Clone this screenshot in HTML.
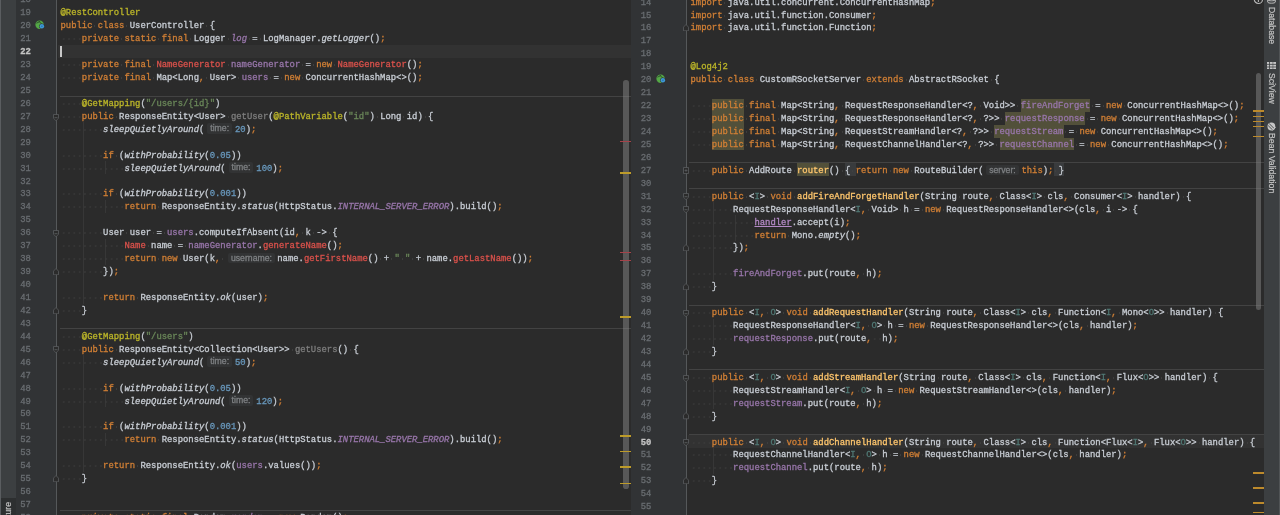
<!DOCTYPE html>
<html lang="en"><head><meta charset="utf-8"><title>IDE</title>
<style>
html,body{margin:0;padding:0;background:#2b2b2b;}
body{width:1280px;height:515px;overflow:hidden;position:relative;font-family:"Liberation Mono","DejaVu Sans Mono",monospace;font-size:8.882px;color:#c8cdd4;}
#root{position:absolute;left:0;top:0;width:1280px;height:515px;overflow:hidden;background:#2b2b2b;}
.cl,.ln{-webkit-text-stroke:0.3px;position:absolute;white-space:pre;line-height:12.94px;height:12.94px;}
.ln{color:#696d71;width:10.7px;text-align:right;}
.ln.cur{color:#c4c4c4;font-weight:bold;}
.k{color:#d07f35}.a{color:#bbb529}.s{color:#6a8759}.n{color:#6897bb}
.f{color:#9876aa}.fi{color:#9876aa;font-style:italic}.i{font-style:italic}
.r{color:#d9514b}.u{color:#7d7d7d}.m{color:#ffc66d}.t{color:#507874}
.p{color:#b389c5;text-decoration:underline}
.w{background-image:radial-gradient(circle at center,#414141 0.45px,rgba(65,65,65,0) 0.85px);background-size:5.329px 100%;background-repeat:repeat-x;}
.h{display:inline-block;text-align:center;vertical-align:top;height:12.94px;}
.h>span{display:inline-block;font-family:"Liberation Sans","DejaVu Sans",sans-serif;font-size:8.7px;color:#7e8083;background:#323334;border-radius:2px;line-height:10.6px;height:10.6px;margin-top:-0.3px;padding:0 3px;vertical-align:top;}

.vt,.vl{position:absolute;writing-mode:vertical-rl;font-family:"Liberation Sans","DejaVu Sans",sans-serif;font-size:8.7px;line-height:12px;width:12px;color:#c4c4c4;-webkit-text-stroke:0.2px;white-space:pre;}
.vt{left:1265.6px}
.vl{transform:rotate(180deg)}
</style></head><body><div id="root">
<!-- left tool strip -->
<div style="position:absolute;left:0;top:0;width:16px;height:515px;background:#3c3f41"></div>
<div style="position:absolute;left:0;top:0;width:1.2px;height:515px;background:#5a5d60"></div>
<div style="position:absolute;left:1.2px;top:497.5px;width:14.8px;height:20px;background:#2d2f30"></div>
<!-- left gutter -->
<div style="position:absolute;left:16px;top:0;width:40.5px;height:515px;background:#313335"></div>
<div style="position:absolute;left:56.3px;top:0;width:1px;height:515px;background:#55585a"></div>
<!-- right gutter -->
<div style="position:absolute;left:631px;top:0;width:55.5px;height:515px;background:#313335"></div>
<div style="position:absolute;left:686.3px;top:0;width:1px;height:515px;background:#55585a"></div>
<!-- right tool strip -->
<div style="position:absolute;left:1264px;top:0;width:16px;height:515px;background:#3c3f41"></div>
<div style="position:absolute;left:711.8px;top:98.71px;width:32.0px;height:12.94px;background:#52503a"></div>
<div style="position:absolute;left:1020.9px;top:98.71px;width:69.3px;height:12.94px;background:#52503a"></div>
<div style="position:absolute;left:711.8px;top:111.65px;width:32.0px;height:12.94px;background:#52503a"></div>
<div style="position:absolute;left:1004.9px;top:111.65px;width:79.9px;height:12.94px;background:#52503a"></div>
<div style="position:absolute;left:711.8px;top:124.59px;width:32.0px;height:12.94px;background:#52503a"></div>
<div style="position:absolute;left:994.3px;top:124.59px;width:69.3px;height:12.94px;background:#52503a"></div>
<div style="position:absolute;left:711.8px;top:137.53px;width:32.0px;height:12.94px;background:#52503a"></div>
<div style="position:absolute;left:999.6px;top:137.53px;width:74.6px;height:12.94px;background:#52503a"></div>
<div style="position:absolute;left:797.1px;top:163.41px;width:32.0px;height:12.94px;background:#52503a"></div>
<div style="position:absolute;left:845.0px;top:163.41px;width:5.3px;height:12.94px;background:#393b3d"></div>
<div style="position:absolute;left:850.4px;top:163.41px;width:5.3px;height:12.94px;background:#393b3d"></div>
<div style="position:absolute;left:1053.5px;top:163.41px;width:5.3px;height:12.94px;background:#393b3d"></div>
<div style="position:absolute;left:1058.8px;top:163.41px;width:5.3px;height:12.94px;background:#393b3d"></div>
<div style="position:absolute;left:57.5px;top:44.8px;width:573.5px;height:12.9px;background:#323232;"></div>
<div style="position:absolute;left:687.5px;top:435.1px;width:576.5px;height:12.9px;background:#323232;"></div>
<div style="position:absolute;left:59.5px;top:95.5px;width:571.5px;height:1.0px;background:#434343;"></div>
<div style="position:absolute;left:59.5px;top:328.4px;width:571.5px;height:1.0px;background:#434343;"></div>
<div style="position:absolute;left:59.5px;top:509.6px;width:571.5px;height:1.0px;background:#434343;"></div>
<div style="position:absolute;left:688.6px;top:162.4px;width:575.4px;height:1.0px;background:#434343;"></div>
<div style="position:absolute;left:688.6px;top:188.3px;width:575.4px;height:1.0px;background:#434343;"></div>
<div style="position:absolute;left:688.6px;top:304.8px;width:575.4px;height:1.0px;background:#434343;"></div>
<div style="position:absolute;left:688.6px;top:369.4px;width:575.4px;height:1.0px;background:#434343;"></div>
<div style="position:absolute;left:688.6px;top:434.1px;width:575.4px;height:1.0px;background:#434343;"></div>
<div style="position:absolute;left:83.4px;top:122.4px;width:1.0px;height:181.2px;background:#373737;"></div>
<div style="position:absolute;left:104.7px;top:161.2px;width:1.0px;height:12.9px;background:#373737;"></div>
<div style="position:absolute;left:104.7px;top:200.0px;width:1.0px;height:12.9px;background:#373737;"></div>
<div style="position:absolute;left:104.7px;top:238.8px;width:1.0px;height:25.9px;background:#373737;"></div>
<div style="position:absolute;left:83.4px;top:355.3px;width:1.0px;height:116.5px;background:#373737;"></div>
<div style="position:absolute;left:104.7px;top:394.1px;width:1.0px;height:12.9px;background:#373737;"></div>
<div style="position:absolute;left:104.7px;top:432.9px;width:1.0px;height:12.9px;background:#373737;"></div>
<div style="position:absolute;left:713.4px;top:202.2px;width:1.0px;height:77.6px;background:#373737;"></div>
<div style="position:absolute;left:734.7px;top:215.2px;width:1.0px;height:25.9px;background:#373737;"></div>
<div style="position:absolute;left:713.4px;top:318.7px;width:1.0px;height:25.9px;background:#373737;"></div>
<div style="position:absolute;left:713.4px;top:383.4px;width:1.0px;height:25.9px;background:#373737;"></div>
<div style="position:absolute;left:713.4px;top:448.1px;width:1.0px;height:25.9px;background:#373737;"></div>
<div style="position:absolute;left:60.3px;top:45.6px;width:1.4px;height:11.2px;background:#c8c8c8;"></div>
<div style="position:absolute;left:623.2px;top:79.5px;width:5.6px;height:409.5px;background:rgba(150,150,150,0.42);border-radius:2.8px;"></div>
<div style="position:absolute;left:1256.0px;top:73.0px;width:5.2px;height:236.5px;background:rgba(150,150,150,0.42);border-radius:2.6px;"></div>
<div style="position:absolute;left:620.0px;top:140.9px;width:11.0px;height:1.0px;background:#a5434a;"></div>
<div style="position:absolute;left:620.0px;top:252.2px;width:11.0px;height:1.0px;background:#a5434a;"></div>
<div style="position:absolute;left:620.0px;top:259.9px;width:11.0px;height:1.0px;background:#a5434a;"></div>
<div style="position:absolute;left:620.0px;top:172.2px;width:11.0px;height:1.5px;background:#bd9b2a;"></div>
<div style="position:absolute;left:620.0px;top:316.1px;width:11.0px;height:1.5px;background:#bd9b2a;"></div>
<div style="position:absolute;left:620.0px;top:435.2px;width:11.0px;height:1.5px;background:#bd9b2a;"></div>
<div style="position:absolute;left:620.0px;top:450.8px;width:11.0px;height:1.5px;background:#bd9b2a;"></div>
<div style="position:absolute;left:620.0px;top:466.2px;width:11.0px;height:1.5px;background:#bd9b2a;"></div>
<div style="position:absolute;left:620.0px;top:482.6px;width:11.0px;height:1.5px;background:#bd9b2a;"></div>
<div style="position:absolute;left:1252.8px;top:110.2px;width:11.2px;height:1.4px;background:#bd8a2c;"></div>
<div style="position:absolute;left:1252.8px;top:115.7px;width:11.2px;height:1.4px;background:#bd8a2c;"></div>
<div style="position:absolute;left:1252.8px;top:120.8px;width:11.2px;height:1.4px;background:#bd8a2c;"></div>
<div style="position:absolute;left:1252.8px;top:125.8px;width:11.2px;height:1.4px;background:#bd8a2c;"></div>
<div style="position:absolute;left:1252.8px;top:135.9px;width:11.2px;height:1.4px;background:#bd8a2c;"></div>
<div style="position:absolute;left:1252.8px;top:472.3px;width:11.2px;height:1.4px;background:#bd8a2c;"></div>
<div style="position:absolute;left:1252.8px;top:487.3px;width:11.2px;height:1.4px;background:#bd8a2c;"></div>
<div style="position:absolute;left:1252.8px;top:502.3px;width:11.2px;height:1.4px;background:#bd8a2c;"></div>
<div style="position:absolute;left:1252.8px;top:511.9px;width:11.2px;height:1.4px;background:#bd8a2c;"></div>
<svg style="position:absolute;left:53.4px;top:113.5px" width="6" height="7.3" viewBox="0 0 6 7.3"><path d="M0.5 0.5 H5.5 V4.2 L3 6.8 L0.5 4.2 Z" fill="#2b2b2b" stroke="#606366" stroke-width="0.7"/><path d="M1.5 3.7 H4.5" stroke="#606366" stroke-width="0.8"/></svg>
<svg style="position:absolute;left:53.4px;top:230.0px" width="6" height="7.3" viewBox="0 0 6 7.3"><path d="M0.5 0.5 H5.5 V4.2 L3 6.8 L0.5 4.2 Z" fill="#2b2b2b" stroke="#606366" stroke-width="0.7"/><path d="M1.5 3.7 H4.5" stroke="#606366" stroke-width="0.8"/></svg>
<svg style="position:absolute;left:53.4px;top:267.9px" width="6" height="7.3" viewBox="0 0 6 7.3"><path d="M0.5 6.8 H5.5 V3.1 L3 0.5 L0.5 3.1 Z" fill="#2b2b2b" stroke="#606366" stroke-width="0.7"/></svg>
<svg style="position:absolute;left:53.4px;top:306.7px" width="6" height="7.3" viewBox="0 0 6 7.3"><path d="M0.5 6.8 H5.5 V3.1 L3 0.5 L0.5 3.1 Z" fill="#2b2b2b" stroke="#606366" stroke-width="0.7"/></svg>
<svg style="position:absolute;left:53.4px;top:346.4px" width="6" height="7.3" viewBox="0 0 6 7.3"><path d="M0.5 0.5 H5.5 V4.2 L3 6.8 L0.5 4.2 Z" fill="#2b2b2b" stroke="#606366" stroke-width="0.7"/><path d="M1.5 3.7 H4.5" stroke="#606366" stroke-width="0.8"/></svg>
<svg style="position:absolute;left:53.4px;top:474.9px" width="6" height="7.3" viewBox="0 0 6 7.3"><path d="M0.5 6.8 H5.5 V3.1 L3 0.5 L0.5 3.1 Z" fill="#2b2b2b" stroke="#606366" stroke-width="0.7"/></svg>
<svg style="position:absolute;left:683.1px;top:24.2px" width="6" height="7.3" viewBox="0 0 6 7.3"><path d="M0.5 6.8 H5.5 V3.1 L3 0.5 L0.5 3.1 Z" fill="#2b2b2b" stroke="#606366" stroke-width="0.7"/></svg>
<svg style="position:absolute;left:683.1px;top:167.4px" width="6" height="7.3" viewBox="0 0 6 7.3"><path d="M0.5 0.5 H5.5 V6.5 H0.5 Z M1.6 3.5 H4.4 M3 2.1 V4.9" fill="#2b2b2b" stroke="#606366" stroke-width="0.7"/></svg>
<svg style="position:absolute;left:683.1px;top:193.4px" width="6" height="7.3" viewBox="0 0 6 7.3"><path d="M0.5 0.5 H5.5 V4.2 L3 6.8 L0.5 4.2 Z" fill="#2b2b2b" stroke="#606366" stroke-width="0.7"/><path d="M1.5 3.7 H4.5" stroke="#606366" stroke-width="0.8"/></svg>
<svg style="position:absolute;left:683.1px;top:206.3px" width="6" height="7.3" viewBox="0 0 6 7.3"><path d="M0.5 0.5 H5.5 V4.2 L3 6.8 L0.5 4.2 Z" fill="#2b2b2b" stroke="#606366" stroke-width="0.7"/><path d="M1.5 3.7 H4.5" stroke="#606366" stroke-width="0.8"/></svg>
<svg style="position:absolute;left:683.1px;top:244.2px" width="6" height="7.3" viewBox="0 0 6 7.3"><path d="M0.5 6.8 H5.5 V3.1 L3 0.5 L0.5 3.1 Z" fill="#2b2b2b" stroke="#606366" stroke-width="0.7"/></svg>
<svg style="position:absolute;left:683.1px;top:283.0px" width="6" height="7.3" viewBox="0 0 6 7.3"><path d="M0.5 6.8 H5.5 V3.1 L3 0.5 L0.5 3.1 Z" fill="#2b2b2b" stroke="#606366" stroke-width="0.7"/></svg>
<svg style="position:absolute;left:683.1px;top:309.8px" width="6" height="7.3" viewBox="0 0 6 7.3"><path d="M0.5 0.5 H5.5 V4.2 L3 6.8 L0.5 4.2 Z" fill="#2b2b2b" stroke="#606366" stroke-width="0.7"/><path d="M1.5 3.7 H4.5" stroke="#606366" stroke-width="0.8"/></svg>
<svg style="position:absolute;left:683.1px;top:347.7px" width="6" height="7.3" viewBox="0 0 6 7.3"><path d="M0.5 6.8 H5.5 V3.1 L3 0.5 L0.5 3.1 Z" fill="#2b2b2b" stroke="#606366" stroke-width="0.7"/></svg>
<svg style="position:absolute;left:683.1px;top:374.5px" width="6" height="7.3" viewBox="0 0 6 7.3"><path d="M0.5 0.5 H5.5 V4.2 L3 6.8 L0.5 4.2 Z" fill="#2b2b2b" stroke="#606366" stroke-width="0.7"/><path d="M1.5 3.7 H4.5" stroke="#606366" stroke-width="0.8"/></svg>
<svg style="position:absolute;left:683.1px;top:412.4px" width="6" height="7.3" viewBox="0 0 6 7.3"><path d="M0.5 6.8 H5.5 V3.1 L3 0.5 L0.5 3.1 Z" fill="#2b2b2b" stroke="#606366" stroke-width="0.7"/></svg>
<svg style="position:absolute;left:683.1px;top:439.2px" width="6" height="7.3" viewBox="0 0 6 7.3"><path d="M0.5 0.5 H5.5 V4.2 L3 6.8 L0.5 4.2 Z" fill="#2b2b2b" stroke="#606366" stroke-width="0.7"/><path d="M1.5 3.7 H4.5" stroke="#606366" stroke-width="0.8"/></svg>
<svg style="position:absolute;left:683.1px;top:477.1px" width="6" height="7.3" viewBox="0 0 6 7.3"><path d="M0.5 6.8 H5.5 V3.1 L3 0.5 L0.5 3.1 Z" fill="#2b2b2b" stroke="#606366" stroke-width="0.7"/></svg>
<svg style="position:absolute;left:35.2px;top:20.1px" width="11" height="10" viewBox="0 0 11 10">
<circle cx="4.6" cy="4.7" r="4.2" fill="#54a846"/>
<path d="M1.4 3.2 L5.2 1.4 M3.6 0.9 L7.6 5.0" stroke="#2c4a2a" stroke-width="0.9" fill="none"/>
<circle cx="6.9" cy="6.2" r="2.7" fill="#313335"/>
<circle cx="6.9" cy="6.2" r="2.2" fill="#3e9ad6"/>
<circle cx="6.9" cy="6.2" r="0.8" fill="#2a6fa8"/>
</svg>
<svg style="position:absolute;left:656.4px;top:74.1px" width="11" height="10" viewBox="0 0 11 10">
<circle cx="4.6" cy="4.7" r="4.2" fill="#54a846"/>
<path d="M1.4 3.2 L5.2 1.4 M3.6 0.9 L7.6 5.0" stroke="#2c4a2a" stroke-width="0.9" fill="none"/>
<circle cx="6.9" cy="6.2" r="2.7" fill="#313335"/>
<circle cx="6.9" cy="6.2" r="2.2" fill="#3e9ad6"/>
<circle cx="6.9" cy="6.2" r="0.8" fill="#2a6fa8"/>
</svg>
<div id="txt" style="position:absolute;left:0;top:0;width:1280px;height:515px;will-change:transform">
<div class="ln" style="left:20.2px;top:-5.61px">18</div>
<div class="ln" style="left:20.2px;top:7.33px">19</div>
<div class="cl" style="left:60.5px;top:7.33px"><span class="a">@RestController</span></div>
<div class="ln" style="left:20.2px;top:20.27px">20</div>
<div class="cl" style="left:60.5px;top:20.27px"><span class="k">public</span><span class="w"> </span><span class="k">class</span><span class="w"> </span>UserController<span class="w"> </span>{</div>
<div class="ln" style="left:20.2px;top:33.21px">21</div>
<div class="cl" style="left:60.5px;top:33.21px"><span class="w">    </span><span class="k">private</span><span class="w"> </span><span class="k">static</span><span class="w"> </span><span class="k">final</span><span class="w"> </span>Logger<span class="w"> </span><span class="fi">log</span><span class="w"> </span>=<span class="w"> </span>LogManager.<span class="i">getLogger</span>()<span class="k">;</span></div>
<div class="ln cur" style="left:20.2px;top:46.15px">22</div>
<div class="ln" style="left:20.2px;top:59.09px">23</div>
<div class="cl" style="left:60.5px;top:59.09px"><span class="w">    </span><span class="k">private</span><span class="w"> </span><span class="k">final</span><span class="w"> </span><span class="r">NameGenerator</span><span class="w"> </span><span class="f">nameGenerator</span><span class="w"> </span>=<span class="w"> </span><span class="k">new</span><span class="w"> </span><span class="r">NameGenerator</span>()<span class="k">;</span></div>
<div class="ln" style="left:20.2px;top:72.03px">24</div>
<div class="cl" style="left:60.5px;top:72.03px"><span class="w">    </span><span class="k">private</span><span class="w"> </span><span class="k">final</span><span class="w"> </span>Map&lt;Long<span class="k">,</span><span class="w"> </span>User&gt;<span class="w"> </span><span class="f">users</span><span class="w"> </span>=<span class="w"> </span><span class="k">new</span><span class="w"> </span>ConcurrentHashMap&lt;&gt;()<span class="k">;</span></div>
<div class="ln" style="left:20.2px;top:84.97px">25</div>
<div class="ln" style="left:20.2px;top:97.91px">26</div>
<div class="cl" style="left:60.5px;top:97.91px"><span class="w">    </span><span class="a">@GetMapping</span>(<span class="s">"/users/{id}"</span>)</div>
<div class="ln" style="left:20.2px;top:110.85px">27</div>
<div class="cl" style="left:60.5px;top:110.85px"><span class="w">    </span><span class="k">public</span><span class="w"> </span>ResponseEntity&lt;User&gt;<span class="w"> </span><span class="u">getUser</span>(<span class="a">@PathVariable</span>(<span class="s">"id"</span>)<span class="w"> </span>Long<span class="w"> </span>id)<span class="w"> </span>{</div>
<div class="ln" style="left:20.2px;top:123.79px">28</div>
<div class="cl" style="left:60.5px;top:123.79px"><span class="w">        </span><span class="i">sleepQuietlyAround</span>(<span class="h" style="width:30.7px"><span>time:</span></span><span class="n">20</span>)<span class="k">;</span></div>
<div class="ln" style="left:20.2px;top:136.73px">29</div>
<div class="ln" style="left:20.2px;top:149.67px">30</div>
<div class="cl" style="left:60.5px;top:149.67px"><span class="w">        </span><span class="k">if</span><span class="w"> </span>(<span class="i">withProbability</span>(<span class="n">0.05</span>))</div>
<div class="ln" style="left:20.2px;top:162.61px">31</div>
<div class="cl" style="left:60.5px;top:162.61px"><span class="w">            </span><span class="i">sleepQuietlyAround</span>(<span class="h" style="width:30.7px"><span>time:</span></span><span class="n">100</span>)<span class="k">;</span></div>
<div class="ln" style="left:20.2px;top:175.55px">32</div>
<div class="ln" style="left:20.2px;top:188.49px">33</div>
<div class="cl" style="left:60.5px;top:188.49px"><span class="w">        </span><span class="k">if</span><span class="w"> </span>(<span class="i">withProbability</span>(<span class="n">0.001</span>))</div>
<div class="ln" style="left:20.2px;top:201.43px">34</div>
<div class="cl" style="left:60.5px;top:201.43px"><span class="w">            </span><span class="k">return</span><span class="w"> </span>ResponseEntity.<span class="i">status</span>(HttpStatus.<span class="fi">INTERNAL_SERVER_ERROR</span>).build()<span class="k">;</span></div>
<div class="ln" style="left:20.2px;top:214.37px">35</div>
<div class="ln" style="left:20.2px;top:227.31px">36</div>
<div class="cl" style="left:60.5px;top:227.31px"><span class="w">        </span>User<span class="w"> </span>user<span class="w"> </span>=<span class="w"> </span><span class="f">users</span>.computeIfAbsent(id<span class="k">,</span><span class="w"> </span>k<span class="w"> </span>-&gt;<span class="w"> </span>{</div>
<div class="ln" style="left:20.2px;top:240.25px">37</div>
<div class="cl" style="left:60.5px;top:240.25px"><span class="w">            </span><span class="r">Name</span><span class="w"> </span>name<span class="w"> </span>=<span class="w"> </span><span class="f">nameGenerator</span>.<span class="r">generateName</span>()<span class="k">;</span></div>
<div class="ln" style="left:20.2px;top:253.19px">38</div>
<div class="cl" style="left:60.5px;top:253.19px"><span class="w">            </span><span class="k">return</span><span class="w"> </span><span class="k">new</span><span class="w"> </span>User(k<span class="k">,</span><span class="w"> </span><span class="h" style="width:51.6px"><span>username:</span></span>name.<span class="r">getFirstName</span>()<span class="w"> </span>+<span class="w"> </span><span class="s">"<span class="w"> </span>"</span><span class="w"> </span>+<span class="w"> </span>name.<span class="r">getLastName</span>())<span class="k">;</span></div>
<div class="ln" style="left:20.2px;top:266.13px">39</div>
<div class="cl" style="left:60.5px;top:266.13px"><span class="w">        </span>})<span class="k">;</span></div>
<div class="ln" style="left:20.2px;top:279.07px">40</div>
<div class="ln" style="left:20.2px;top:292.01px">41</div>
<div class="cl" style="left:60.5px;top:292.01px"><span class="w">        </span><span class="k">return</span><span class="w"> </span>ResponseEntity.<span class="i">ok</span>(user)<span class="k">;</span></div>
<div class="ln" style="left:20.2px;top:304.95px">42</div>
<div class="cl" style="left:60.5px;top:304.95px"><span class="w">    </span>}</div>
<div class="ln" style="left:20.2px;top:317.89px">43</div>
<div class="ln" style="left:20.2px;top:330.83px">44</div>
<div class="cl" style="left:60.5px;top:330.83px"><span class="w">    </span><span class="a">@GetMapping</span>(<span class="s">"/users"</span>)</div>
<div class="ln" style="left:20.2px;top:343.77px">45</div>
<div class="cl" style="left:60.5px;top:343.77px"><span class="w">    </span><span class="k">public</span><span class="w"> </span>ResponseEntity&lt;Collection&lt;User&gt;&gt;<span class="w"> </span><span class="u">getUsers</span>()<span class="w"> </span>{</div>
<div class="ln" style="left:20.2px;top:356.71px">46</div>
<div class="cl" style="left:60.5px;top:356.71px"><span class="w">        </span><span class="i">sleepQuietlyAround</span>(<span class="h" style="width:30.7px"><span>time:</span></span><span class="n">50</span>)<span class="k">;</span></div>
<div class="ln" style="left:20.2px;top:369.65px">47</div>
<div class="ln" style="left:20.2px;top:382.59px">48</div>
<div class="cl" style="left:60.5px;top:382.59px"><span class="w">        </span><span class="k">if</span><span class="w"> </span>(<span class="i">withProbability</span>(<span class="n">0.05</span>))</div>
<div class="ln" style="left:20.2px;top:395.53px">49</div>
<div class="cl" style="left:60.5px;top:395.53px"><span class="w">            </span><span class="i">sleepQuietlyAround</span>(<span class="h" style="width:30.7px"><span>time:</span></span><span class="n">120</span>)<span class="k">;</span></div>
<div class="ln" style="left:20.2px;top:408.47px">50</div>
<div class="ln" style="left:20.2px;top:421.41px">51</div>
<div class="cl" style="left:60.5px;top:421.41px"><span class="w">        </span><span class="k">if</span><span class="w"> </span>(<span class="i">withProbability</span>(<span class="n">0.001</span>))</div>
<div class="ln" style="left:20.2px;top:434.35px">52</div>
<div class="cl" style="left:60.5px;top:434.35px"><span class="w">            </span><span class="k">return</span><span class="w"> </span>ResponseEntity.<span class="i">status</span>(HttpStatus.<span class="fi">INTERNAL_SERVER_ERROR</span>).build()<span class="k">;</span></div>
<div class="ln" style="left:20.2px;top:447.29px">53</div>
<div class="ln" style="left:20.2px;top:460.23px">54</div>
<div class="cl" style="left:60.5px;top:460.23px"><span class="w">        </span><span class="k">return</span><span class="w"> </span>ResponseEntity.<span class="i">ok</span>(<span class="f">users</span>.values())<span class="k">;</span></div>
<div class="ln" style="left:20.2px;top:473.17px">55</div>
<div class="cl" style="left:60.5px;top:473.17px"><span class="w">    </span>}</div>
<div class="ln" style="left:20.2px;top:486.11px">56</div>
<div class="ln" style="left:20.2px;top:499.05px">57</div>
<div class="ln" style="left:20.2px;top:511.99px">58</div>
<div class="cl" style="left:60.5px;top:511.99px"><span class="w">    </span><span class="k">private</span><span class="w"> </span><span class="k">static</span><span class="w"> </span><span class="k">final</span><span class="w"> </span>Random<span class="w"> </span><span class="fi">random</span><span class="w"> </span>=<span class="w"> </span><span class="k">new</span><span class="w"> </span>Random()<span class="k">;</span></div>
<div class="ln" style="left:640.7px;top:-3.41px">14</div>
<div class="cl" style="left:690.5px;top:-3.41px"><span class="k">import</span><span class="w"> </span>java.util.concurrent.ConcurrentHashMap<span class="k">;</span></div>
<div class="ln" style="left:640.7px;top:9.53px">15</div>
<div class="cl" style="left:690.5px;top:9.53px"><span class="k">import</span><span class="w"> </span>java.util.function.Consumer<span class="k">;</span></div>
<div class="ln" style="left:640.7px;top:22.47px">16</div>
<div class="cl" style="left:690.5px;top:22.47px"><span class="k">import</span><span class="w"> </span>java.util.function.Function<span class="k">;</span></div>
<div class="ln" style="left:640.7px;top:35.41px">17</div>
<div class="ln" style="left:640.7px;top:48.35px">18</div>
<div class="ln" style="left:640.7px;top:61.29px">19</div>
<div class="cl" style="left:690.5px;top:61.29px"><span class="a">@Log4j2</span></div>
<div class="ln" style="left:640.7px;top:74.23px">20</div>
<div class="cl" style="left:690.5px;top:74.23px"><span class="k">public</span><span class="w"> </span><span class="k">class</span><span class="w"> </span>CustomRSocketServer<span class="w"> </span><span class="k">extends</span><span class="w"> </span>AbstractRSocket<span class="w"> </span>{</div>
<div class="ln" style="left:640.7px;top:87.17px">21</div>
<div class="ln" style="left:640.7px;top:100.11px">22</div>
<div class="cl" style="left:690.5px;top:100.11px"><span class="w">    </span><span class="k">public</span><span class="w"> </span><span class="k">final</span><span class="w"> </span>Map&lt;String<span class="k">,</span><span class="w"> </span>RequestResponseHandler&lt;?<span class="k">,</span><span class="w"> </span>Void&gt;&gt;<span class="w"> </span><span class="f">fireAndForget</span><span class="w"> </span>=<span class="w"> </span><span class="k">new</span><span class="w"> </span>ConcurrentHashMap&lt;&gt;()<span class="k">;</span></div>
<div class="ln" style="left:640.7px;top:113.05px">23</div>
<div class="cl" style="left:690.5px;top:113.05px"><span class="w">    </span><span class="k">public</span><span class="w"> </span><span class="k">final</span><span class="w"> </span>Map&lt;String<span class="k">,</span><span class="w"> </span>RequestResponseHandler&lt;?<span class="k">,</span><span class="w"> </span>?&gt;&gt;<span class="w"> </span><span class="f">requestResponse</span><span class="w"> </span>=<span class="w"> </span><span class="k">new</span><span class="w"> </span>ConcurrentHashMap&lt;&gt;()<span class="k">;</span></div>
<div class="ln" style="left:640.7px;top:125.99px">24</div>
<div class="cl" style="left:690.5px;top:125.99px"><span class="w">    </span><span class="k">public</span><span class="w"> </span><span class="k">final</span><span class="w"> </span>Map&lt;String<span class="k">,</span><span class="w"> </span>RequestStreamHandler&lt;?<span class="k">,</span><span class="w"> </span>?&gt;&gt;<span class="w"> </span><span class="f">requestStream</span><span class="w"> </span>=<span class="w"> </span><span class="k">new</span><span class="w"> </span>ConcurrentHashMap&lt;&gt;()<span class="k">;</span></div>
<div class="ln" style="left:640.7px;top:138.93px">25</div>
<div class="cl" style="left:690.5px;top:138.93px"><span class="w">    </span><span class="k">public</span><span class="w"> </span><span class="k">final</span><span class="w"> </span>Map&lt;String<span class="k">,</span><span class="w"> </span>RequestChannelHandler&lt;?<span class="k">,</span><span class="w"> </span>?&gt;&gt;<span class="w"> </span><span class="f">requestChannel</span><span class="w"> </span>=<span class="w"> </span><span class="k">new</span><span class="w"> </span>ConcurrentHashMap&lt;&gt;()<span class="k">;</span></div>
<div class="ln" style="left:640.7px;top:151.87px">26</div>
<div class="ln" style="left:640.7px;top:164.81px">27</div>
<div class="cl" style="left:690.5px;top:164.81px"><span class="w">    </span><span class="k">public</span><span class="w"> </span>AddRoute<span class="w"> </span><span class="m">router</span>()<span class="w"> </span>{<span class="w"> </span><span class="k">return</span><span class="w"> </span><span class="k">new</span><span class="w"> </span>RouteBuilder(<span class="h" style="width:37.9px"><span>server:</span></span><span class="k">this</span>)<span class="k">;</span><span class="w"> </span>}</div>
<div class="ln" style="left:640.7px;top:177.75px">30</div>
<div class="ln" style="left:640.7px;top:190.69px">31</div>
<div class="cl" style="left:690.5px;top:190.69px"><span class="w">    </span><span class="k">public</span><span class="w"> </span>&lt;<span class="t">I</span>&gt;<span class="w"> </span><span class="k">void</span><span class="w"> </span><span class="m">addFireAndForgetHandler</span>(String<span class="w"> </span>route<span class="k">,</span><span class="w"> </span>Class&lt;<span class="t">I</span>&gt;<span class="w"> </span>cls<span class="k">,</span><span class="w"> </span>Consumer&lt;<span class="t">I</span>&gt;<span class="w"> </span>handler)<span class="w"> </span>{</div>
<div class="ln" style="left:640.7px;top:203.63px">32</div>
<div class="cl" style="left:690.5px;top:203.63px"><span class="w">        </span>RequestResponseHandler&lt;<span class="t">I</span><span class="k">,</span><span class="w"> </span>Void&gt;<span class="w"> </span>h<span class="w"> </span>=<span class="w"> </span><span class="k">new</span><span class="w"> </span>RequestResponseHandler&lt;&gt;(cls<span class="k">,</span><span class="w"> </span>i<span class="w"> </span>-&gt;<span class="w"> </span>{</div>
<div class="ln" style="left:640.7px;top:216.57px">33</div>
<div class="cl" style="left:690.5px;top:216.57px"><span class="w">            </span><span class="p">handler</span>.accept(i)<span class="k">;</span></div>
<div class="ln" style="left:640.7px;top:229.51px">34</div>
<div class="cl" style="left:690.5px;top:229.51px"><span class="w">            </span><span class="k">return</span><span class="w"> </span>Mono.<span class="i">empty</span>()<span class="k">;</span></div>
<div class="ln" style="left:640.7px;top:242.45px">35</div>
<div class="cl" style="left:690.5px;top:242.45px"><span class="w">        </span>})<span class="k">;</span></div>
<div class="ln" style="left:640.7px;top:255.39px">36</div>
<div class="ln" style="left:640.7px;top:268.33px">37</div>
<div class="cl" style="left:690.5px;top:268.33px"><span class="w">        </span><span class="f">fireAndForget</span>.put(route<span class="k">,</span><span class="w"> </span>h)<span class="k">;</span></div>
<div class="ln" style="left:640.7px;top:281.27px">38</div>
<div class="cl" style="left:690.5px;top:281.27px"><span class="w">    </span>}</div>
<div class="ln" style="left:640.7px;top:294.21px">39</div>
<div class="ln" style="left:640.7px;top:307.15px">40</div>
<div class="cl" style="left:690.5px;top:307.15px"><span class="w">    </span><span class="k">public</span><span class="w"> </span>&lt;<span class="t">I</span><span class="k">,</span><span class="w"> </span><span class="t">O</span>&gt;<span class="w"> </span><span class="k">void</span><span class="w"> </span><span class="m">addRequestHandler</span>(String<span class="w"> </span>route<span class="k">,</span><span class="w"> </span>Class&lt;<span class="t">I</span>&gt;<span class="w"> </span>cls<span class="k">,</span><span class="w"> </span>Function&lt;<span class="t">I</span><span class="k">,</span><span class="w"> </span>Mono&lt;<span class="t">O</span>&gt;&gt;<span class="w"> </span>handler)<span class="w"> </span>{</div>
<div class="ln" style="left:640.7px;top:320.09px">41</div>
<div class="cl" style="left:690.5px;top:320.09px"><span class="w">        </span>RequestResponseHandler&lt;<span class="t">I</span><span class="k">,</span><span class="w"> </span><span class="t">O</span>&gt;<span class="w"> </span>h<span class="w"> </span>=<span class="w"> </span><span class="k">new</span><span class="w"> </span>RequestResponseHandler&lt;&gt;(cls<span class="k">,</span><span class="w"> </span>handler)<span class="k">;</span></div>
<div class="ln" style="left:640.7px;top:333.03px">42</div>
<div class="cl" style="left:690.5px;top:333.03px"><span class="w">        </span><span class="f">requestResponse</span>.put(route<span class="k">,</span><span class="w">  </span>h)<span class="k">;</span></div>
<div class="ln" style="left:640.7px;top:345.97px">43</div>
<div class="cl" style="left:690.5px;top:345.97px"><span class="w">    </span>}</div>
<div class="ln" style="left:640.7px;top:358.91px">44</div>
<div class="ln" style="left:640.7px;top:371.85px">45</div>
<div class="cl" style="left:690.5px;top:371.85px"><span class="w">    </span><span class="k">public</span><span class="w"> </span>&lt;<span class="t">I</span><span class="k">,</span><span class="w"> </span><span class="t">O</span>&gt;<span class="w"> </span><span class="k">void</span><span class="w"> </span><span class="m">addStreamHandler</span>(String<span class="w"> </span>route<span class="k">,</span><span class="w"> </span>Class&lt;<span class="t">I</span>&gt;<span class="w"> </span>cls<span class="k">,</span><span class="w"> </span>Function&lt;<span class="t">I</span><span class="k">,</span><span class="w"> </span>Flux&lt;<span class="t">O</span>&gt;&gt;<span class="w"> </span>handler)<span class="w"> </span>{</div>
<div class="ln" style="left:640.7px;top:384.79px">46</div>
<div class="cl" style="left:690.5px;top:384.79px"><span class="w">        </span>RequestStreamHandler&lt;<span class="t">I</span><span class="k">,</span><span class="w"> </span><span class="t">O</span>&gt;<span class="w"> </span>h<span class="w"> </span>=<span class="w"> </span><span class="k">new</span><span class="w"> </span>RequestStreamHandler&lt;&gt;(cls<span class="k">,</span><span class="w"> </span>handler)<span class="k">;</span></div>
<div class="ln" style="left:640.7px;top:397.73px">47</div>
<div class="cl" style="left:690.5px;top:397.73px"><span class="w">        </span><span class="f">requestStream</span>.put(route<span class="k">,</span><span class="w"> </span>h)<span class="k">;</span></div>
<div class="ln" style="left:640.7px;top:410.67px">48</div>
<div class="cl" style="left:690.5px;top:410.67px"><span class="w">    </span>}</div>
<div class="ln" style="left:640.7px;top:423.61px">49</div>
<div class="ln cur" style="left:640.7px;top:436.55px">50</div>
<div class="cl" style="left:690.5px;top:436.55px"><span class="w">    </span><span class="k">public</span><span class="w"> </span>&lt;<span class="t">I</span><span class="k">,</span><span class="w"> </span><span class="t">O</span>&gt;<span class="w"> </span><span class="k">void</span><span class="w"> </span><span class="m">addChannelHandler</span>(String<span class="w"> </span>route<span class="k">,</span><span class="w"> </span>Class&lt;<span class="t">I</span>&gt;<span class="w"> </span>cls<span class="k">,</span><span class="w"> </span>Function&lt;Flux&lt;<span class="t">I</span>&gt;<span class="k">,</span><span class="w"> </span>Flux&lt;<span class="t">O</span>&gt;&gt;<span class="w"> </span>handler)<span class="w"> </span>{</div>
<div class="ln" style="left:640.7px;top:449.49px">51</div>
<div class="cl" style="left:690.5px;top:449.49px"><span class="w">        </span>RequestChannelHandler&lt;<span class="t">I</span><span class="k">,</span><span class="w"> </span><span class="t">O</span>&gt;<span class="w"> </span>h<span class="w"> </span>=<span class="w"> </span><span class="k">new</span><span class="w"> </span>RequestChannelHandler&lt;&gt;(cls<span class="k">,</span><span class="w"> </span>handler)<span class="k">;</span></div>
<div class="ln" style="left:640.7px;top:462.43px">52</div>
<div class="cl" style="left:690.5px;top:462.43px"><span class="w">        </span><span class="f">requestChannel</span>.put(route<span class="k">,</span><span class="w"> </span>h)<span class="k">;</span></div>
<div class="ln" style="left:640.7px;top:475.37px">53</div>
<div class="cl" style="left:690.5px;top:475.37px"><span class="w">    </span>}</div>
<div class="ln" style="left:640.7px;top:488.31px">54</div>
<div class="ln" style="left:640.7px;top:501.25px">55</div>
<!-- right strip icons -->
<div style="position:absolute;left:1279px;top:0;width:1px;height:515px;background:#515456"></div>
<svg style="position:absolute;left:1253px;top:-6px" width="11" height="11" viewBox="0 0 11 11"><circle cx="5.4" cy="5.4" r="4.1" fill="none" stroke="#b4b4b4" stroke-width="1.2"/><path d="M5.4 5.2 V8" stroke="#b4b4b4" stroke-width="1.1"/></svg>
<svg style="position:absolute;left:1267px;top:-5px" width="9" height="9" viewBox="0 0 9 9"><path d="M0.7 1 V7 C0.7 8.6 8.3 8.6 8.3 7 V1" fill="none" stroke="#bdbdbd" stroke-width="1"/><path d="M0.7 4.6 C0.7 6.2 8.3 6.2 8.3 4.6" fill="none" stroke="#bdbdbd" stroke-width="1"/></svg>
<svg style="position:absolute;left:1267px;top:61.8px" width="9.2" height="7.4" viewBox="0 0 9.2 7.4"><g fill="#c4c4c4"><rect x="0" y="0" width="2.1" height="1.9"/><rect x="2.9" y="0" width="6.3" height="1.9"/><rect x="0" y="2.7" width="2.1" height="1.9"/><rect x="2.9" y="2.7" width="6.3" height="1.9"/><rect x="0" y="5.4" width="2.1" height="1.9"/><rect x="2.9" y="5.4" width="6.3" height="1.9"/></g><path d="M5.9 0 V7.4" stroke="#3c3f41" stroke-width="0.5"/></svg>
<svg style="position:absolute;left:1267.2px;top:121.6px" width="9.4" height="9.4" viewBox="0 0 9.4 9.4"><circle cx="4.4" cy="4.5" r="3.9" fill="#c6c6c6"/><path d="M2.2 1.6 L7.2 6.6 M1.2 3.6 L5.4 7.8" stroke="#3c3f41" stroke-width="0.9" fill="none"/><path d="M5.2 8.6 L8.6 5.2" stroke="#c6c6c6" stroke-width="1"/></svg>
<!-- strip labels -->
<div class="vl" style="left:2.2px;top:502.2px">Structure</div>
<div class="vt" style="top:7px">Database</div>
<div class="vt" style="top:73px">SciView</div>
<div class="vt" style="top:132.8px">Bean Validation</div>
</div>
</div></body></html>
